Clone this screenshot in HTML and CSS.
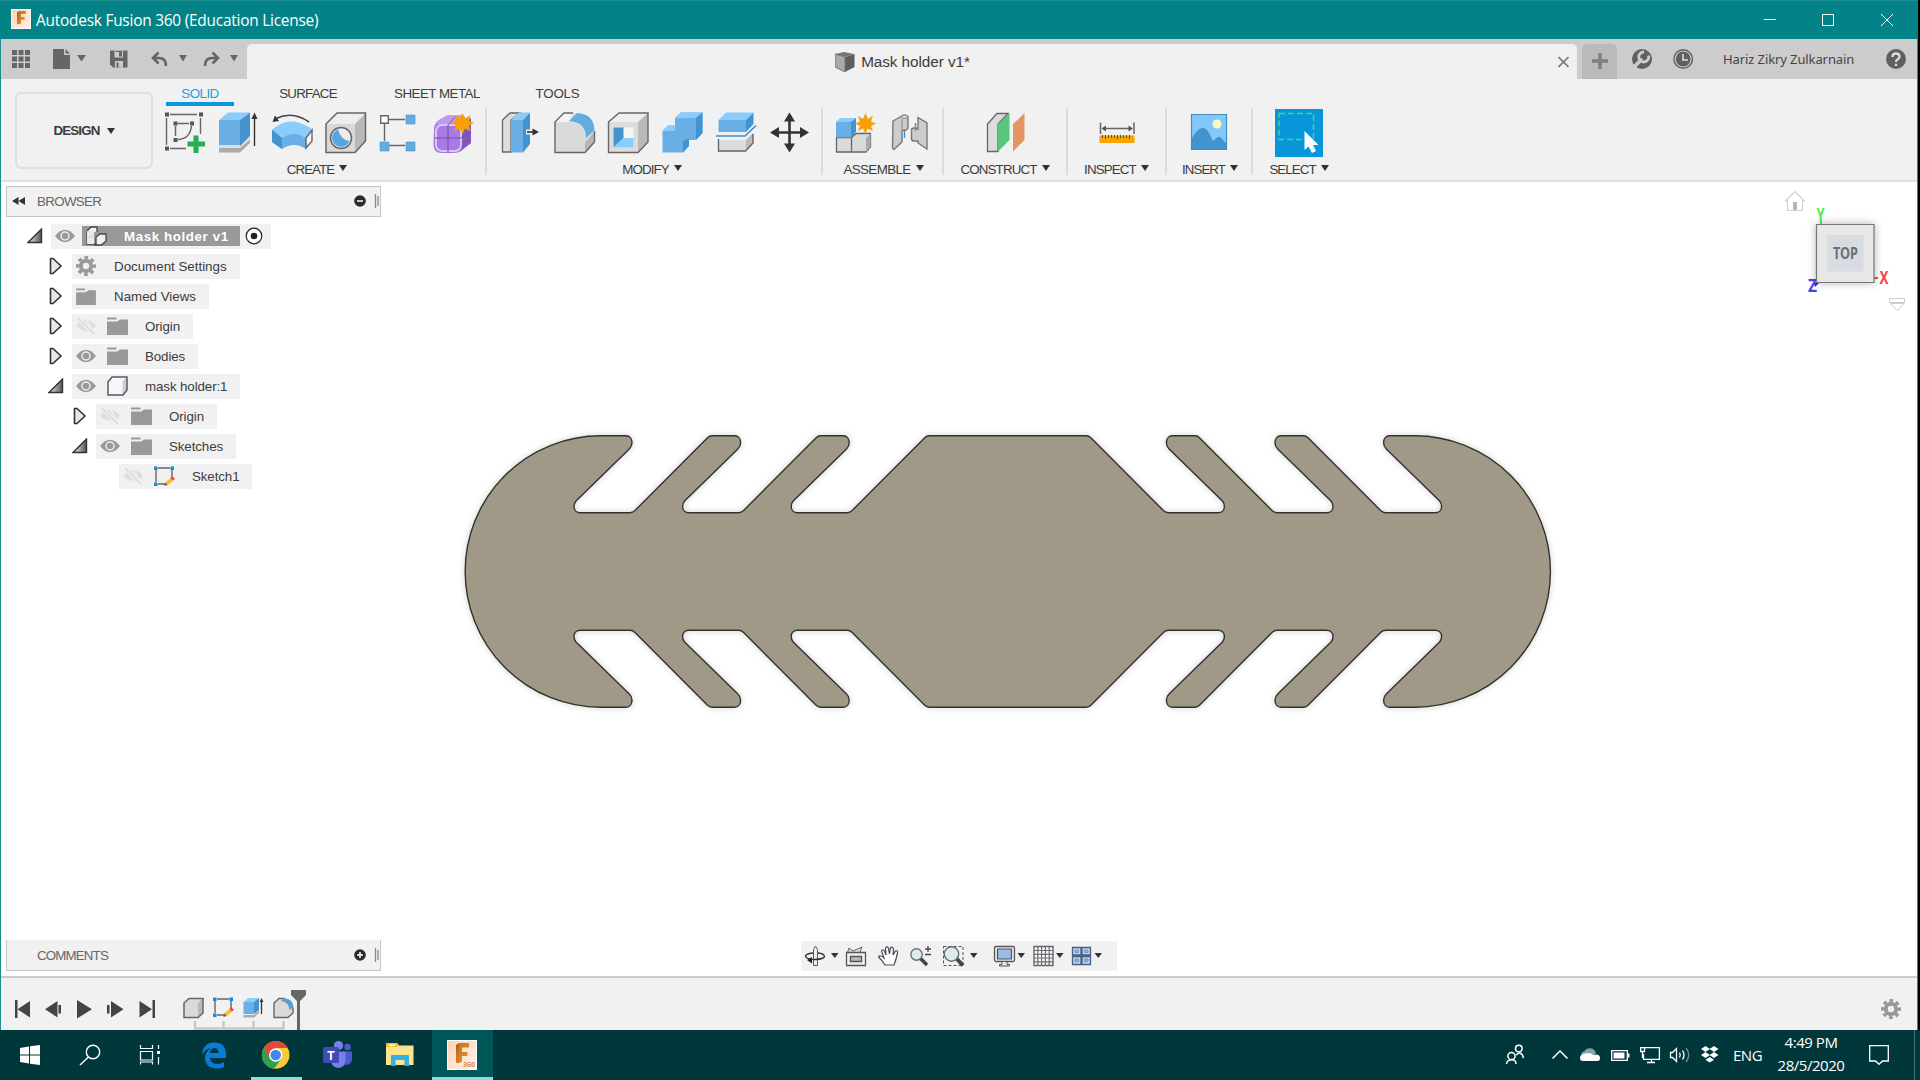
FILE: index.html
```html
<!DOCTYPE html>
<html lang="en">
<head>
<meta charset="utf-8">
<title>Autodesk Fusion 360 (Education License)</title>
<link rel="stylesheet" href="styles.css">
</head>
<body>
<svg class="defs" aria-hidden="true">
  <defs>
    <symbol id="eye" viewBox="0 0 20 20"><path d="M0 10Q10-2.500 20 10Q10 22.500 0 10Z" fill="#999"/><circle cx="10" cy="10" r="4" fill="none" stroke="#eee" stroke-width="1.500"/></symbol>
    <symbol id="eye-off" viewBox="0 0 20 20"><path d="M0 10Q4 4 10 3.800L15 13Q8 17.500 0 10ZM12 4Q17 5.500 20 10L16.500 13.500Z" fill="#dedede"/><path d="M2 2L18 18" stroke="#f1f1f1" stroke-width="4"/><path d="M2 2L18 18" stroke="#d8d8d8" stroke-width="1.600"/></symbol>
    <symbol id="folder" viewBox="0 0 21 18"><path d="M0 4.500H10L13 2.500H21V18H0Z" fill="#999"/><path d="M0 .500H9.500V2.500H0Z" fill="#999"/></symbol>
    <symbol id="gear" viewBox="0 0 20 20"><circle cx="10" cy="10" r="5.200" fill="none" stroke="#999" stroke-width="4"/><circle cx="10" cy="10" r="8.300" fill="none" stroke="#999" stroke-width="3.400" stroke-dasharray="3.600 2.919" stroke-dashoffset="1.800"/></symbol>
    <symbol id="closed" viewBox="0 0 14 18"><path d="M1.500 1.500H4L12 9L4 16.500H1.500Z" fill="#e8e8e8" stroke="#333" stroke-width="1.600"/></symbol>
    <symbol id="open" viewBox="0 0 16 16"><path d="M1 14.500L14.500 1V14.500Z" fill="url(#tri)" stroke="#333" stroke-width="1.400"/></symbol>
    <symbol id="sketch" viewBox="0 0 21 21"><path d="M4 2H16M2 4V16M18 4V12M4 18H12" stroke="#666" stroke-width="1.400" fill="none"/><path d="M0 .500h3.500V4H0zM16.500 .500H20V4h-3.500zM0 16.500h3.500V20H0z" fill="#0d8ee0"/><path d="M11 16.500l6-5 2.500 3-6 5z" fill="#f9bd3d"/><path d="M16.500 11.800l2-1.500 2.300 2.800-2 1.500z" fill="#f0384a"/><path d="M10.500 18l1-1.500 2 2.500-3 1z" fill="#666"/></symbol>
    <linearGradient id="tri" x1="0" x2="1"><stop offset="0" stop-color="#eee"/><stop offset="1" stop-color="#555"/></linearGradient>
    <linearGradient id="orange" x1="0" x2="1" y2="1"><stop offset="0" stop-color="#b3580e"/><stop offset="1" stop-color="#f0a448"/></linearGradient>
    <linearGradient id="cream" x1="0" x2="1" y2="1"><stop offset="0" stop-color="#fbd3b0"/><stop offset="1" stop-color="#fff4ec"/></linearGradient>
    <symbol id="fusion" viewBox="0 0 30 30"><path d="M0 0H30V30H0Z" fill="#fff"/><path d="M1 1H29V29H1Z" fill="url(#cream)"/><path d="M9 5L12 3H22V7.500H15V12H20.500V16H15V21L12 23H9Z" fill="url(#orange)"/><path d="M12 3H22V6L15 7.500V22L12 23Z" fill="#d9832c" opacity=".6"/></symbol>
  </defs>
</svg>

<div class="window">
  <header class="titlebar">
    <svg class="app-logo" width="20" height="20"><use href="#fusion"/></svg>
    <span class="app-title">Autodesk Fusion 360 (Education License)</span>
    <svg class="window-buttons" width="153" height="38" viewBox="1764 0 153 38" fill="none" stroke="#fff" stroke-width="1"><path d="M1764 18.500H1776M1822.500 13.500H1833.500V24.500H1822.500ZM1881 13L1893 25M1893 13L1881 25"/></svg>
  </header>

  <div class="appbar">
    <div class="quick">
      <svg width="40" height="40" viewBox="1 39 40 40"><path d="M12 50h5v5h-5zm6.500 0h5v5h-5zm6.500 0h5v5h-5zM12 56.500h5v5h-5zm6.500 0h5v5h-5zm6.500 0h5v5h-5zM12 63h5v5h-5zm6.500 0h5v5h-5zm6.500 0h5v5h-5z"/></svg>
      <svg width="57" height="40" viewBox="41 39 57 40"><path d="M53 49H64V55H70V69H53ZM65.500 49L70 53.500H65.500ZM77 55H86L81.500 61.500Z"/></svg>
      <svg width="42" height="40" viewBox="98 39 42 40"><path d="M110 50.500H127.500V67.500H113L110 64.500Z"/><path d="M114.500 50.500H123V57.500H114.500ZM115 61H123V67.500H115Z" fill="#ccc"/><path d="M115.500 51H122V56.500H119V52H115.500ZM116.500 62.500H118.500V67.500H116.500Z"/></svg>
      <svg width="55" height="40" viewBox="140 39 55 40"><path d="M158.500 52.500L153 58L158.500 63.500M153.500 58H159Q166 58 166 66" fill="none" stroke="#666" stroke-width="2.600"/><path d="M179 55H187L183 61.500Z"/></svg>
      <svg width="52" height="40" viewBox="195 39 52 40"><path d="M212.500 52.500L218 58L212.500 63.500M217.500 58H212Q205 58 205 66" fill="none" stroke="#666" stroke-width="2.600"/><path d="M230 55H238L234 61.500Z"/></svg>
    </div>
    <div class="doc-tab">
      <div class="doc-title">
        <svg width="20" height="20" viewBox="0 0 20 20"><path d="M0 2L10 5V20L0 15Z" fill="#aaa"/><path d="M10 5L19.500 2V15L10 20Z" fill="#5d5d5d"/><path d="M0 2L9 0L19.500 2L10 5Z" fill="#777"/><path d="M0 2V15L10 20V5Z" fill="none" stroke="#777"/></svg>
        <span>Mask holder v1*</span>
      </div>
      <svg width="11" height="12" viewBox="0 0 11 12"><path d="M.500 1L10.500 11M10.500 1L.500 11" stroke="#777" stroke-width="1.600"/></svg>
    </div>
    <div class="new-tab"><svg width="16" height="16" viewBox="0 0 16 16"><path d="M8 0V16M0 8H16" stroke="#808080" stroke-width="3.400"/></svg></div>
    <div class="account">
      <svg width="41" height="40" viewBox="1621 39 41 40"><circle cx="1642" cy="59" r="10" fill="#606060"/><path d="M1634 67L1641 60" stroke="#ccc" stroke-width="3.800" stroke-linecap="round"/><path d="M1648.500 55.500A5 5 0 1 1 1644 52" fill="none" stroke="#ccc" stroke-width="2.800"/></svg>
      <svg width="41" height="40" viewBox="1662 39 41 40"><circle cx="1683.200" cy="59" r="9.300" fill="none" stroke="#606060" stroke-width="1.400"/><circle cx="1683.200" cy="59" r="7.400" fill="#606060"/><path d="M1683 54V60H1688" fill="none" stroke="#ddd" stroke-width="1.600"/></svg>
      <span class="user">Hariz Zikry Zulkarnain</span>
      <svg class="help" width="20" height="20" viewBox="0 0 20 20"><circle cx="10" cy="10" r="10" fill="#606060"/><path d="M6.500 8Q6.500 4.500 10 4.500T13.500 7.700Q13.500 9 11.700 10.200T10 13M10 14.800V17" fill="none" stroke="#ddd" stroke-width="2.300"/></svg>
    </div>
  </div>

  <div class="ribbon">
    <div class="workspace"><span>DESIGN</span><i class="caret"></i></div>
    <div class="ribbon-main">
      <nav class="ribbon-tabs">
        <span class="rtab solid">SOLID</span><span class="rtab surface">SURFACE</span><span class="rtab sheet">SHEET METAL</span><span class="rtab tools">TOOLS</span>
      </nav>
      <div class="groups">
        <section class="group create">
          <div class="icons">
            <svg width="54" height="52" viewBox="158 108 54 52"><path d="M170 114.500H197M166.500 118V145M200.500 118V134M170 148.500H186" stroke="#666" stroke-width="1.400"/><path d="M178 123.500H189M175.500 126V136M191.500 126Q190 139 178 139.500" fill="none" stroke="#666" stroke-width="1.500"/><path d="M165 112.500h4v4h-4zm34 0h4v4h-4zm-34 34h4v4h-4zm8.500-25h4v4h-4zm16.500 0h4v4h-4zm-16.500 16.500h4v4h-4z" fill="#555"/><path d="M193.500 135.500H198.500V141.500H205V146.500H198.500V153H193.500V146.500H187.500V141.500H193.500Z" fill="#27ae52"/></svg>
            <svg width="54" height="52" viewBox="212 108 54 52"><path d="M219 148H240L250 139V143L240 152.500H219Z" fill="#aaa"/><path d="M219 145H240L250 136V139.500L240 148H219Z" fill="#ddd"/><path d="M219 120H240V145H219Z" fill="#69aee5"/><path d="M219 120L228 112.500H250L240 120Z" fill="#8accfb"/><path d="M240 120L250 112.500V136L240 146Z" fill="#4393cf"/><path d="M254.500 117V146" stroke="#333" stroke-width="1.400"/><path d="M254.500 112.500L257.500 119H251.500Z" fill="#333"/></svg>
            <svg width="54" height="52" viewBox="266 108 54 52"><path d="M276 118.500Q293 110.500 309 122" fill="none" stroke="#444" stroke-width="1.600"/><path d="M272.500 122L275 115.500L279 121Z" fill="#333"/><path d="M272 130Q290 115 313 130L306 138V149Q294 141 282 149L272 142Z" fill="#69aee5"/><path d="M272 130Q290 113 313 130L305 138Q294 130 282 138Z" fill="#8accfb"/><path d="M272 130L282 138V149L272 142Z" fill="#4393cf"/><path d="M306 138L312 130V141L306 148Z" fill="#f6f6f6" stroke="#666" stroke-width="1.400"/></svg>
            <svg width="54" height="52" viewBox="320 108 54 52"><path d="M326 124L337 113H365.500V141L355 152.500H326Z" fill="#eee"/><path d="M326 124H355V152.500H326Z" fill="#d8d8d8"/><path d="M355 124L365.500 113V141L355 152.500Z" fill="#b8b8b8"/><path d="M326 124L337 113H365.500V141L355 152.500H326Z" fill="none" stroke="#666" stroke-width="1.500"/><circle cx="341" cy="138" r="10.500" fill="#ececec" stroke="#666" stroke-width="1.500"/><path d="M338 129.500A9 9 0 1 0 349.500 141Q341 140 338 129.500Z" fill="#57a6df"/></svg>
            <svg width="54" height="52" viewBox="374 108 54 52"><path d="M389 119.500H405M384.500 124V141M389 145.500H405" stroke="#666" stroke-width="1.400"/><path d="M380.700 115.700h7.600v7.600h-7.600z" fill="#fff" stroke="#666" stroke-width="1.400"/><path d="M406 115h9v9h-9zm0 27h9v9h-9zm-26 0h9v9h-9z" fill="#63ace2" stroke="#5c99c8" stroke-width=".7"/></svg>
            <svg width="54" height="52" viewBox="428 108 54 52"><path d="M434 129Q434 124 439 120L447 115.500H463L471 124V143L461 151Q458 153 452 153H441Q434 153 433.500 145Z" fill="#a87ae4"/><path d="M436 122L447 115.500H463L458 125H439Z" fill="#c298f3"/><path d="M462 125L471 118V143L460 151Z" fill="#8258b9"/><rect x="436" y="125" width="25" height="26" rx="6" fill="none" stroke="#dac6f6" stroke-width="2"/><path d="M434 138H461L471 132M448 125V153M448 125L456 116" fill="none" stroke="#7749ae"/><path d="M462.500 113L465 118.500L470.500 115L469 121L474 123L469 125.500L470 131L465 128.500L462.500 134L460 128.500L454.500 131L456 125.500L451 123L456 120.500L454.500 115L460 118Z" fill="#f79f06"/></svg>
          </div>
          <div class="label">CREATE<i class="caret"></i></div>
        </section>
        <section class="group modify">
          <div class="icons">
            <svg width="54" height="52" viewBox="493 108 54 52"><path d="M502.500 120L510 113H520L511 120V152H502.500Z" fill="#ddd" stroke="#666" stroke-width="1.300"/><path d="M511 120H523V152.500H511Z" fill="#69aee5"/><path d="M511 120L519 112.500H530L523 120Z" fill="#8accfb"/><path d="M523 120L530 112.500V144L523 152.500Z" fill="#4393cf"/><path d="M526 132H539" stroke="#f1f1f1" stroke-width="5"/><path d="M527 132H534" stroke="#333" stroke-width="1.600"/><path d="M539 132L532.500 128.500V135.500Z" fill="#333"/></svg>
            <svg width="54" height="52" viewBox="547 108 54 52"><path d="M555 122L564 113H574L594.500 131V142L585 152.500H555Z" fill="#dadada"/><path d="M585 143L594.500 131V142L585 152.500Z" fill="#b7b7b7"/><path d="M555 122L564 113H573L569 122Z" fill="#f4f4f4"/><path d="M573 113H564L555 122V152.500H585L594.500 142V131" fill="none" stroke="#666" stroke-width="1.400"/><path d="M569 121L577 113Q594 114 594.500 130L586 138Q586 122 569 121Z" fill="#63ace2"/></svg>
            <svg width="54" height="52" viewBox="601 108 54 52"><path d="M608.500 122L619 113H648V142L638 152.500H608.500Z" fill="#eee"/><path d="M638 122L648 113V142L638 152.500Z" fill="#b9b9b9"/><path d="M608.500 122H638V152.500H608.500Z" fill="#dcdcdc"/><path d="M608.500 122L619 113H648V142L638 152.500H608.500Z" fill="none" stroke="#666" stroke-width="1.400"/><path d="M613.500 127.500H633.500V147.500H613.500Z" fill="#f4f4f4"/><path d="M613.500 127.500H623.500V138L613.500 147.500Z" fill="#4393cf"/><path d="M613.500 147.500L623.500 138H633.500V147.500Z" fill="#8accfb"/></svg>
            <svg width="54" height="52" viewBox="655 108 54 52"><path d="M675 118L681 112.500H702.500V133L696 140H689V146L683 152.500H662.500V131L668 125.500H675Z" fill="#69aee5"/><path d="M675 118L681 112.500H702.500L696 118ZM662.500 131L668 125.500H675V131Z" fill="#8accfb"/><path d="M696 118L702.500 112.500V133L696 140ZM683 141L689 138V146L683 152.500Z" fill="#4393cf"/></svg>
            <svg width="54" height="52" viewBox="709 108 54 52"><path d="M718.500 120L726 112.500H753.500L746 120Z" fill="#8accfb"/><path d="M718.500 120H746V132H718.500Z" fill="#69aee5"/><path d="M746 120L753.500 112.500V124L746 132Z" fill="#4393cf"/><path d="M716 136H745L756 125.500" fill="none" stroke="#2e8fdc" stroke-width="1.500"/><path d="M718.500 140H746L753 133V143L745.500 151H718.500Z" fill="#dcdcdc"/><path d="M746 140L753 133V143L746 151Z" fill="#bbb"/><path d="M718.500 139V151H745.500L753 143V134" fill="none" stroke="#666" stroke-width="1.400"/></svg>
            <svg width="54" height="52" viewBox="763 108 54 52"><path d="M789.500 118V147M776 132.500H803" stroke="#333" stroke-width="2.600"/><path d="M789.500 112.500L795 121.500H784ZM789.500 152.500L795 143.500H784ZM770 132.500L779 127V138ZM809 132.500L800 127V138Z" fill="#333"/></svg>
          </div>
          <div class="label">MODIFY<i class="caret"></i></div>
        </section>
        <section class="group assemble">
          <div class="icons">
            <svg width="54" height="52" viewBox="830 108 54 52"><path d="M837.500 137.500H852.500V152H837.500ZM852.500 137.500L857 133.500H871.500V147L867 152H852.500Z" fill="#dadada" stroke="#666" stroke-width="1.300"/><path d="M867 138L871.500 133.500V147L867 152Z" fill="#aaa"/><path d="M837 122H852V137.500H837Z" fill="#69aee5"/><path d="M837 122L841 118H857L852 122Z" fill="#8accfb"/><path d="M852 122L857 118V132L852 137.500Z" fill="#4393cf"/><path d="M866.500 113L869 119L874 115.500L872 121.500L877 123.500L872 126L874 131L868.500 128.500L866.500 134L864 128.500L858.500 131L861 126L856 123.500L861 121.500L859 116L864 119Z" fill="#f79f06"/></svg>
            <svg width="54" height="52" viewBox="884 108 54 52"><path d="M894 121L902 116.500Q905 114 909 116.500V128Q908 131 905 130L903 131V142L895 149.500Q893.500 149 893.500 147Z" fill="#ccc" stroke="#777" stroke-width="1.400"/><path d="M903 119V130" stroke="#888"/><ellipse cx="905.500" cy="116.700" rx="3" ry="1.500" fill="#eee" stroke="#777"/><path d="M905.500 131V138" stroke="#2197f3" stroke-width="1.400"/><path d="M919 117.500L928 123V149L919 143V141H914Q912 140 912.500 137V129Q915 127 919 129Z" fill="#ccc" stroke="#777" stroke-width="1.400"/><path d="M916.500 123V131" stroke="#2197f3" stroke-width="1.400"/></svg>
          </div>
          <div class="label">ASSEMBLE<i class="caret"></i></div>
        </section>
        <section class="group construct">
          <div class="icons"><svg width="54" height="52" viewBox="978 108 54 52"><path d="M987.500 124L997 113.500H1008L998 124V151.500H987.500Z" fill="#ddd" stroke="#666" stroke-width="1.300"/><path d="M998 124L1009.500 113V140L998 151.500Z" fill="#5ac57c"/><path d="M1013 124L1024.500 113V140L1013 151.500Z" fill="#e59561"/></svg></div>
          <div class="label">CONSTRUCT<i class="caret"></i></div>
        </section>
        <section class="group inspect">
          <div class="icons"><svg width="54" height="52" viewBox="1090 108 54 52"><path d="M1100.500 122.500V134M1134 122.500V134M1104 128.500H1131" stroke="#666" stroke-width="1.500"/><path d="M1101.500 128.500L1106 125.500V131.500ZM1133 128.500L1128.500 125.500V131.500Z" fill="#555"/><path d="M1099.500 135.500H1134.500V143H1099.500Z" fill="#f9a303"/><path d="M1102.500 135v3m3-3v4m3-4v3m3-3v3m3-3v3m3-3v4m3-4v3m3-3v3m3-3v3m3-3v4" stroke="#555"/></svg></div>
          <div class="label">INSPECT<i class="caret"></i></div>
        </section>
        <section class="group insert">
          <div class="icons"><svg width="54" height="52" viewBox="1182 108 54 52"><path d="M1191.500 114.500H1226.500V149.500H1191.500Z" fill="#82c8fa" stroke="#478dbf" stroke-width="1.200"/><path d="M1192 138Q1202 121 1209 133L1213 141L1217 137.500Q1220 135 1223 140L1226 143V149H1192Z" fill="#4393cf"/><circle cx="1217" cy="124" r="4.500" fill="#fbf7bd"/></svg></div>
          <div class="label">INSERT<i class="caret"></i></div>
        </section>
        <section class="group select">
          <div class="icons"><svg width="54" height="52" viewBox="1273 108 54 52"><path d="M1276 109H1324V157H1276Z" fill="#0896da"/><path d="M1280 113.500H1314.500V139.500H1280Z" fill="none" stroke="#4bd18b" stroke-width="1.500" stroke-dasharray="6 3"/><path d="M1305.500 131V150L1309.500 146.500L1313 153L1317 151L1314 145H1319.500Z" fill="#fff"/></svg></div>
          <div class="label">SELECT<i class="caret"></i></div>
        </section>
      </div>
    </div>
  </div>

  <main class="viewport">
    <svg class="canvas" width="1916" height="794" viewBox="1 182 1916 794">
      <path class="model" d="M600.800 435.800H626
        c4 0 6 3.500 6 7 0 2.500-1 4.700-2.700 6.200l-53.300 52c-1.500 1.700-2 3.500-2 5.500 0 3.500 2.500 6.200 6.500 6.200h49.500c2 0 3.500-.8 5-2.200l72.300-72.500c1.500-1.500 3-2.200 4.700-2.200h22.600
        c4 0 6 3.500 6 7 0 2.500-1 4.700-2.700 6.200l-53.300 52c-1.500 1.700-2 3.500-2 5.500 0 3.500 2.500 6.200 6.500 6.200h49.500c2 0 3.500-.8 5-2.200l72.300-72.500c1.500-1.500 3-2.200 4.700-2.200h22.600
        c4 0 6 3.500 6 7 0 2.500-1 4.700-2.700 6.200l-53.300 52c-1.500 1.700-2 3.500-2 5.500 0 3.500 2.500 6.200 6.500 6.200h49.500c2 0 3.500-.8 5-2.200l72.300-72.500c1.500-1.500 3-2.200 4.700-2.200
        H1086.400
        c1.700 0 3.200.7 4.700 2.200l72.300 72.500c1.500 1.400 3 2.200 5 2.200h49.500c4 0 6.500-2.700 6.500-6.200 0-2-.5-3.800-2-5.500l-53.300-52c-1.700-1.500-2.700-3.700-2.700-6.200 0-3.500 2-7 6-7h22.600
        c1.700 0 3.200.7 4.700 2.200l72.300 72.500c1.500 1.400 3 2.200 5 2.200h49.500c4 0 6.500-2.700 6.500-6.200 0-2-.5-3.800-2-5.500l-53.300-52c-1.700-1.500-2.700-3.700-2.700-6.200 0-3.500 2-7 6-7h22.600
        c1.700 0 3.200.7 4.700 2.200l72.300 72.500c1.500 1.400 3 2.200 5 2.200h49.500c4 0 6.500-2.700 6.500-6.200 0-2-.5-3.800-2-5.500l-53.300-52c-1.700-1.500-2.700-3.700-2.700-6.200 0-3.500 2-7 6-7
        H1414.800A135.700 135.700 0 0 1 1414.800 707.200H1389.600
        c-4 0-6-3.500-6-7 0-2.500 1-4.700 2.700-6.200l53.300-52c1.500-1.700 2-3.500 2-5.500 0-3.500-2.500-6.200-6.500-6.200h-49.500c-2 0-3.500.8-5 2.200l-72.300 72.500c-1.500 1.500-3 2.200-4.700 2.200h-22.600
        c-4 0-6-3.500-6-7 0-2.500 1-4.700 2.700-6.200l53.300-52c1.500-1.700 2-3.500 2-5.500 0-3.500-2.500-6.200-6.500-6.200h-49.500c-2 0-3.500.8-5 2.200l-72.300 72.500c-1.500 1.500-3 2.200-4.700 2.200h-22.600
        c-4 0-6-3.500-6-7 0-2.500 1-4.700 2.700-6.200l53.300-52c1.500-1.700 2-3.500 2-5.500 0-3.500-2.500-6.200-6.500-6.200h-49.500c-2 0-3.500.8-5 2.200l-72.300 72.500c-1.500 1.500-3 2.200-4.700 2.200
        H929.200
        c-1.700 0-3.200-.7-4.700-2.200l-72.300-72.500c-1.500-1.400-3-2.200-5-2.200h-49.500c-4 0-6.500 2.700-6.500 6.200 0 2 .5 3.800 2 5.500l53.300 52c1.700 1.500 2.700 3.700 2.700 6.200 0 3.500-2 7-6 7h-22.600
        c-1.700 0-3.200-.7-4.700-2.200l-72.300-72.500c-1.500-1.400-3-2.200-5-2.200h-49.500c-4 0-6.500 2.700-6.500 6.200 0 2 .5 3.800 2 5.500l53.300 52c1.700 1.500 2.700 3.700 2.700 6.200 0 3.500-2 7-6 7h-22.600
        c-1.700 0-3.200-.7-4.700-2.200l-72.300-72.500c-1.500-1.400-3-2.200-5-2.200h-49.500c-4 0-6.500 2.700-6.500 6.200 0 2 .5 3.800 2 5.500l53.300 52c1.700 1.500 2.700 3.700 2.700 6.200 0 3.500-2 7-6 7
        H600.800A135.700 135.700 0 0 1 600.800 435.800Z"/>
      <path d="M1785 201.500L1795 191.500L1805 201.500M1787.500 200V210.500H1802.500V200" fill="none" stroke="#d0d0d0" stroke-width="1.200"/><path d="M1793 202H1797V210H1793Z" fill="#b5b5b5"/>
      <text class="axis" x="1816.500" y="220.500" fill="#4cf04c" textLength="8" lengthAdjust="spacingAndGlyphs">Y</text>
      <path d="M1821 220V224" stroke="#4cf04c" stroke-width="2"/>
      <text class="axis" x="1879.500" y="283.500" fill="#f94646" textLength="9" lengthAdjust="spacingAndGlyphs">X</text>
      <path d="M1874 278H1878" stroke="#f94646" stroke-width="2"/>
      <text class="axis" x="1808" y="292" fill="#4646f0" textLength="9" lengthAdjust="spacingAndGlyphs">Z</text>
      <path class="cube" d="M1816.500 224.500H1874V282.500H1816.500Z"/>
      <path d="M1827 235H1863.500V271.500H1827Z" fill="#d8dce1"/>
      <path d="M1814 283H1819L1815 287Z" fill="#2020f0"/>
      <text class="face" x="1833" y="259" textLength="25" lengthAdjust="spacingAndGlyphs">TOP</text>
      <path d="M1889.500 298.500H1904.500V302.500H1889.500ZM1890.500 303.500H1904L1897.500 310.500Z" fill="#fff" stroke="#ccc"/>
    </svg>

    <aside class="browser">
      <div class="panel-head">
        <svg width="31" height="14" viewBox="6 0 31 14"><path d="M18.500 3V11L12 7ZM25 3V11L18.500 7Z" fill="#333"/></svg>
        <span>BROWSER</span>
        <svg width="26" height="16" viewBox="0 0 26 16"><circle cx="6" cy="8" r="5.800" fill="#2c2c2c"/><path d="M3 8H9" stroke="#fff" stroke-width="1.500"/><path d="M21.500 1V15M24 3V13" stroke="#888" stroke-width="1.300"/></svg>
      </div>
      <ul class="tree">
        <li class="l0"><svg class="tg" width="16" height="16"><use href="#open"/></svg><div class="node root"><svg width="20" height="20"><use href="#eye"/></svg>
          <span class="hot"><svg width="22" height="20" viewBox="0 0 22 20"><path d="M1 5L5 1H11V6M1 5V18H9V19H15.500L20 15V8H14L10 11V19" fill="#f0f1f6" stroke="#444" stroke-width="1.300"/><path d="M1 5H8V18H1Z" fill="#e8e9f0"/><path d="M1 11H9" stroke="#ccc"/></svg>Mask holder v1</span>
          <svg width="18" height="18" viewBox="0 0 18 18"><circle cx="9" cy="9" r="7.800" fill="#fff" stroke="#222" stroke-width="1.200"/><circle cx="9" cy="9" r="3.300" fill="#222"/></svg></div></li>
        <li class="l1"><svg class="tg" width="14" height="18"><use href="#closed"/></svg><div class="node"><svg width="20" height="20"><use href="#gear"/></svg><span class="wide">Document Settings</span></div></li>
        <li class="l1"><svg class="tg" width="14" height="18"><use href="#closed"/></svg><div class="node"><svg width="20" height="17"><use href="#folder"/></svg><span class="wide">Named Views</span></div></li>
        <li class="l1"><svg class="tg" width="14" height="18"><use href="#closed"/></svg><div class="node"><svg width="20" height="20"><use href="#eye-off"/></svg><svg width="21" height="18"><use href="#folder"/></svg><span>Origin</span></div></li>
        <li class="l1"><svg class="tg" width="14" height="18"><use href="#closed"/></svg><div class="node"><svg width="20" height="20"><use href="#eye"/></svg><svg width="21" height="18"><use href="#folder"/></svg><span>Bodies</span></div></li>
        <li class="l1"><svg class="tg" width="16" height="16"><use href="#open"/></svg><div class="node"><svg width="20" height="20"><use href="#eye"/></svg><svg width="21" height="20" viewBox="0 0 21 20"><path d="M1 5L5 1H20V15L16 19H1Z" fill="#f6f7fa"/><path d="M15.500 5L20 1V15L15.500 19Z" fill="#d0d1d6"/><path d="M1 6L5 1H20V14L16 19H1Z" fill="none" stroke="#555b66" stroke-width="1.500"/></svg><span>mask holder:1</span></div></li>
        <li class="l2"><svg class="tg" width="14" height="18"><use href="#closed"/></svg><div class="node"><svg width="20" height="20"><use href="#eye-off"/></svg><svg width="21" height="18"><use href="#folder"/></svg><span>Origin</span></div></li>
        <li class="l2"><svg class="tg" width="16" height="16"><use href="#open"/></svg><div class="node"><svg width="20" height="20"><use href="#eye"/></svg><svg width="21" height="18"><use href="#folder"/></svg><span>Sketches</span></div></li>
        <li class="l3"><div class="node"><svg width="20" height="20"><use href="#eye-off"/></svg><svg width="21" height="21"><use href="#sketch"/></svg><span>Sketch1</span></div></li>
      </ul>
    </aside>

    <div class="comments panel-head">
      <span>COMMENTS</span>
      <svg width="26" height="16" viewBox="0 0 26 16"><circle cx="6" cy="8" r="5.800" fill="#2c2c2c"/><path d="M3 8H9M6 5V11" stroke="#fff" stroke-width="1.500"/><path d="M21.500 1V15M24 3V13" stroke="#888" stroke-width="1.300"/></svg>
    </div>

    <div class="navbar">
      <svg width="40" height="30" viewBox="801 941 40 30"><path d="M813.500 949.500L815.500 946L817.500 949.500V965.500H813.500Z" fill="#eee" stroke="#555"/><path d="M813 953Q805 954 805.500 956.500Q807 959.500 815 959.500Q824 959 824.500 956.500Q824 953.500 818 953" fill="none" stroke="#333" stroke-width="1.400"/><path d="M807 960L812 957V963.500Z" fill="#222"/><path d="M831 953H838.500L834.800 958Z" fill="#333"/></svg>
      <svg width="31" height="30" viewBox="841 941 31 30"><path d="M847 954L849 948L853 951L862 947L860 952" fill="#ddd" stroke="#666"/><path d="M846.500 952.500H865.500V965.500H846.500Z" fill="#eee" stroke="#555" stroke-width="1.300"/><path d="M850.500 956.500H861.500V961.500H850.500Z" fill="#b5b8c8" stroke="#555" stroke-width="1.300"/></svg>
      <svg width="32" height="30" viewBox="872 941 32 30"><path d="M885 965Q882 960 878.500 957Q880 954.500 884 958L881.500 951Q882.500 948.500 884.500 951L886 955L885.500 948Q887.500 945.500 888.500 948.500L889.500 954L890.500 948Q892.500 946 893.500 949L893 955L895.500 951Q898 950 897.500 953Q896 960 894 965Z" fill="#fff" stroke="#444a55" stroke-width="1.200"/></svg>
      <svg width="34" height="30" viewBox="904 941 34 30"><path d="M920 958L927 965" stroke="#444" stroke-width="3.500"/><circle cx="916.500" cy="954.500" r="5.700" fill="#dcecee" stroke="#667078" stroke-width="1.400"/><path d="M925 949H931M928 946V952M925 954.500H931" stroke="#444" stroke-width="1.300"/></svg>
      <svg width="46" height="30" viewBox="938 941 46 30"><path d="M943.500 946.500H963V965.500H943.500Z" fill="none" stroke="#555" stroke-dasharray="3 2"/><path d="M956 958L963 965.500" stroke="#444" stroke-width="4"/><circle cx="951.500" cy="954" r="7.200" fill="#dcecee" stroke="#667078" stroke-width="1.400"/><path d="M970 953H977.500L973.800 958Z" fill="#333"/></svg>
      <svg width="44" height="30" viewBox="984 941 44 30"><rect x="994.500" y="946.500" width="20" height="15" rx="1.500" fill="#eee" stroke="#555" stroke-width="1.300"/><path d="M997.500 949H1011.500V959H997.500Z" fill="#9dbbe3" stroke="#456" stroke-width="1.200"/><path d="M1002 962V964.500H999.500V966H1009.500V964.500H1007V962" fill="#eee" stroke="#555"/><path d="M1017.500 953H1025L1021.300 958Z" fill="#333"/></svg>
      <svg width="39" height="30" viewBox="1028 941 39 30"><path d="M1034 946.500H1053V965.500H1034Z" fill="#fafafa" stroke="#666" stroke-width="1.400"/><path d="M1034 950.500H1053M1034 954.300H1053M1034 958H1053M1034 961.800H1053M1037.800 946V966M1041.600 946V966M1045.400 946V966M1049.200 946V966" stroke="#6a6d78" stroke-width="1.200"/><path d="M1056 953H1063.500L1059.800 958Z" fill="#333"/></svg>
      <svg width="39" height="30" viewBox="1067 941 39 30"><path d="M1072.500 947.500H1081V955H1072.500ZM1082 947.500H1090.500V955H1082ZM1072.500 956.500H1081V964.500H1072.500ZM1082 956.500H1090.500V964.500H1082Z" fill="#bdd3ee" stroke="#4b5f80" stroke-width="1.300"/><path d="M1075 950h3.500v2.500h-3.500zm9.500 0h3.500v2.500h-3.500zm-9.500 9h3.500v2.500h-3.500zm9.500 0h3.500v2.500h-3.500z" fill="#8cb2e4" stroke="#5d87be" stroke-width=".7"/><path d="M1094.500 953H1102L1098.300 958Z" fill="#333"/></svg>
    </div>
  </main>

  <footer class="timeline">
    <svg width="170" height="52" viewBox="1 978 170 52" fill="#444"><path d="M15 1000H17.500V1018H15ZM30 1001V1017.500L17.500 1009.200ZM57.500 1001V1017.500L45 1009.200ZM58.500 1005H61V1013.500H58.500ZM77 1000V1018.500L92 1009.200ZM107 1005H109.500V1013.500H107ZM111 1001V1017.500L123.500 1009.200ZM139.500 1001V1017.500L152 1009.200ZM152.500 1000H155V1018H152.500Z"/></svg>
    <svg width="150" height="52" viewBox="171 978 150 52"><path d="M184 1003L189 998.500H203V1013L198 1017.500H184Z" fill="#dadada"/><path d="M198 1003L203 998.500V1013L198 1017.500Z" fill="#b9b9b9"/><path d="M184 1003L189 998.500H203V1013L198 1017.500H184Z" fill="none" stroke="#666" stroke-width="1.500"/>
      <use href="#sketch" x="213" y="997" width="21" height="21"/>
      <path d="M243.500 1015H254L259 1010V1013L254 1017.500H243.500Z" fill="#aaa"/><path d="M243.500 1002L248 998H259L254 1002Z" fill="#8accfb"/><path d="M243.500 1002H254V1014H243.500Z" fill="#69aee5"/><path d="M254 1002L259 998V1010L254 1014Z" fill="#4393cf"/><path d="M261.500 1001V1014" stroke="#333" stroke-width="1.300"/><path d="M261.500 998L263.500 1002H259.500Z" fill="#333"/>
      <path d="M274 1003L279 998.500H284L293 1008V1013L288 1017.500H274Z" fill="#dadada" stroke="#666" stroke-width="1.400"/><path d="M281 1001L285 998.500Q293 999 293.500 1007L289.500 1010Q289 1002 281 1001Z" fill="#4f9fdb"/>
      <path d="M195 1021V1028.500H283.500V1021M223.500 1021V1028M253.500 1021V1028" fill="none" stroke="#c8c8c8" stroke-width="2.400"/>
      <path d="M291 990H306V995L300 1001V1030H297V1001L291 995Z" fill="#666"/></svg>
    <svg class="settings" width="20" height="20"><use href="#gear"/></svg>
  </footer>
</div>

<div class="taskbar">
  <div class="apps">
    <svg width="60" height="50" viewBox="0 1030 60 50"><path d="M20 1048L29 1046.500V1054.500H20ZM30 1046.300L40 1045V1054.500H30ZM20 1055.500H29V1063.500L20 1062ZM30 1055.500H40V1065L30 1063.700Z" fill="#fff"/></svg>
    <svg width="60" height="50" viewBox="60 1030 60 50"><circle cx="93" cy="1052" r="6.700" fill="none" stroke="#fff" stroke-width="1.400"/><path d="M88.500 1057L80 1065" stroke="#fff" stroke-width="1.400"/></svg>
    <svg width="60" height="50" viewBox="120 1030 60 50"><path d="M140.500 1045V1048.500H152.500V1045M140.500 1051.500H152.500V1060H140.500ZM140.500 1064.500V1062H152.500V1064.500M158.500 1045V1049M158.500 1057V1064.500" fill="none" stroke="#fff" stroke-width="1.200"/><path d="M157 1051h3v3h-3z" fill="#fff"/></svg>
    <svg width="71" height="50" viewBox="180 1030 71 50"><path d="M202 1055Q203 1042.500 214.500 1042.500Q226 1043 226 1054V1058H210Q211 1064 217.500 1064Q221 1064 224 1062V1067Q220 1069 215.500 1068.500Q205 1067.500 205 1058Q205 1052 211 1048Q205 1049 202 1055ZM210 1053H218.500Q218 1048 214.500 1048Q210.500 1048.500 210 1053Z" fill="#0a7bd8" fill-rule="evenodd"/></svg>
    <svg class="running" width="51" height="50" viewBox="251 1030 51 50"><circle cx="275.700" cy="1055" r="13.800" fill="#fbc93a"/><path d="M263.700 1048A13.800 13.800 0 0 1 287.700 1048H275.700V1055L269 1058Z" fill="#de4b3d"/><path d="M263.700 1048A13.800 13.800 0 0 0 274 1068.700L282 1058L275 1055L269 1057Z" fill="#2ba24c"/><circle cx="275.700" cy="1055" r="6.700" fill="#fff"/><circle cx="275.700" cy="1055" r="5.300" fill="#4486ee"/></svg>
    <svg width="71" height="50" viewBox="302 1030 71 50"><circle cx="338.500" cy="1045.500" r="4.600" fill="#7a80ea"/><circle cx="347.500" cy="1047" r="3.200" fill="#5059c9"/><path d="M342 1051.500H352V1060Q351 1065 345 1065Z" fill="#5059c9"/><path d="M331 1051.500H345.500V1060Q345 1068 338 1068Q332 1067 331 1062Z" fill="#7a80ea"/><rect x="323" y="1047" width="16" height="16" rx="1.500" fill="#4149b4"/><text x="327.300" y="1059.500" class="teams">T</text></svg>
    <svg width="59" height="50" viewBox="373 1030 59 50"><path d="M386 1043H397L399 1045.500H413.500V1065H386Z" fill="#fce48e"/><path d="M386 1043H397L399 1045.500L396 1047H386Z" fill="#f5c02c"/><path d="M389 1044.500H395V1046H389Z" fill="#fff"/><path d="M391 1055.500Q391 1055 392 1055H408Q409 1055 409 1056V1066H404.500V1060H395.500V1066H391Z" fill="#35b0e7"/></svg>
    <div class="active"><svg width="30" height="30"><use href="#fusion"/></svg><span>360</span></div>
  </div>
  <div class="tray">
    <svg width="40" height="50" viewBox="1500 1030 40 50" fill="none" stroke="#fff" stroke-width="1.500"><circle cx="1518.800" cy="1048.500" r="3.300"/><path d="M1516 1055Q1521.500 1050 1523.500 1058"/><circle cx="1511.500" cy="1056" r="3.600"/><path d="M1506.500 1064Q1507 1060 1511.500 1059.800T1516 1064"/></svg>
    <svg width="34" height="50" viewBox="1540 1030 34 50"><path d="M1552.500 1058.500L1560 1051L1567.500 1058.500" fill="none" stroke="#fff" stroke-width="1.500"/></svg>
    <svg width="32" height="50" viewBox="1574 1030 32 50"><path d="M1582 1056Q1580 1052 1584 1051.500Q1587 1047 1592 1048.500Q1595 1049.500 1596 1053L1590 1058Z" fill="#8aa3a5"/><path d="M1583 1061Q1580 1061 1580 1057.500Q1580.500 1054 1585 1053.500Q1591 1052 1593 1055Q1600 1053 1600 1058.500Q1600 1061 1597 1061Z" fill="#fff"/></svg>
    <svg width="28" height="50" viewBox="1606 1030 28 50"><path d="M1611.700 1050.700H1627.300V1060.300H1611.700Z" fill="none" stroke="#fff" stroke-width="1.300"/><path d="M1613.500 1052.500H1624.500V1058.500H1613.500ZM1628 1053.500H1629.500V1057.500H1628Z" fill="#fff"/></svg>
    <svg width="31" height="50" viewBox="1634 1030 31 50" fill="none" stroke="#fff" stroke-width="1.300"><path d="M1645 1047.600H1659.400V1059.400H1643.500V1054M1651.500 1059.500V1062M1647 1062.500H1655M1640.700 1047.600H1644.500V1051.500H1640.700ZM1642.500 1052V1058"/></svg>
    <svg width="30" height="50" viewBox="1665 1030 30 50" fill="none" stroke="#fff" stroke-width="1.300"><path d="M1670.500 1052.500H1672.500L1676.500 1048.500V1061.500L1672.500 1057.500H1670.500ZM1679.500 1052.500Q1681 1055 1679.500 1057.500M1682.500 1050.500Q1685.500 1055 1682.500 1059.500"/><path d="M1686 1048Q1691.500 1055 1686 1062" stroke="#6d8f90"/></svg>
    <svg width="32" height="50" viewBox="1695 1030 32 50"><path d="M1705.500 1046L1710 1049L1705.500 1052L1701 1049ZM1714 1046L1718.500 1049L1714 1052L1709.500 1049ZM1705.500 1052L1710 1055L1705.500 1058L1701 1055ZM1714 1052L1718.500 1055L1714 1058L1709.500 1055ZM1709.700 1057L1714 1059.800L1709.700 1062.500L1705.500 1059.800Z" fill="#fff"/></svg>
    <span class="lang">ENG</span>
    <div class="clock"><span>4:49 PM</span><span>28/5/2020</span></div>
    <svg class="notice" width="20" height="20" viewBox="0 0 20 20"><path d="M.700 .700H19.300V16H13.500L10 19.300L6.500 16H.700Z" fill="none" stroke="#fff" stroke-width="1.300"/></svg>
  </div>
</div>
</body>
</html>
```
FILE: styles.css
```css
* { box-sizing: border-box; }
body { margin: 0; width: 1920px; height: 1080px; overflow: hidden; background: #000; font-family: "Liberation Sans", Arial, sans-serif; font-size: 13.33px; color: #3c3c3c; }
svg { display: block; flex: none; }
.defs { position: absolute; width: 0; height: 0; }

.window { width: 1918px; height: 1030px; border: solid #1d8f92; border-width: 0 1px; display: flex; flex-direction: column; background: #fff; }

.titlebar { height: 39px; flex: none; background: #038387; border-top: 1px solid #1d8f92; display: flex; align-items: center; margin: 0 -1px; padding-left: 11px; color: #fff; }
.app-logo { margin-top: -2px; }
.app-title { flex: 1; margin-left: 5px; padding-top: 1px; font: 15.4px "Open Sans", "Noto Sans", sans-serif; letter-spacing: -.22px; }
.window-buttons { align-self: flex-start; margin-right: 1px; }

.appbar { height: 40px; flex: none; background: #ccc; display: flex; }
.quick { display: flex; fill: #666; }
.doc-tab { width: 1330px; margin-top: 5px; background: #f1f1f1; border-radius: 5px 5px 0 0; display: flex; align-items: center; padding-right: 8px; }
.doc-title { flex: 1; display: flex; align-items: center; justify-content: center; gap: 6px; font-size: 15.3px; letter-spacing: -.07px; }
.new-tab { width: 35px; margin: 5px 4px 0 5px; background: #bababa; border-radius: 5px 5px 0 0; display: flex; align-items: center; justify-content: center; }
.new-tab svg { margin-top: -2px; }
.account { flex: 1; display: flex; align-items: center; }
.user { margin-left: 20px; flex: 1; font: 13px "Noto Sans", sans-serif; letter-spacing: -.1px; color: #444; white-space: nowrap; }
.help { margin-right: 11px; }

.ribbon { height: 103px; flex: none; background: #f1f1f1; border-bottom: 2px solid #e0e0e0; display: flex; }
.workspace { width: 138px; height: 77px; margin: 13px 5px 0 14px; border: 2px solid #e0e0e0; border-radius: 6px; display: flex; align-items: center; justify-content: center; font-weight: bold; letter-spacing: -.85px; }
.caret { display: inline-block; width: 0; height: 0; border: 4px solid transparent; border-top: 6px solid #333; border-bottom: 0; margin-left: 5px; vertical-align: 3px; }
.workspace .caret { margin-left: 7px; }
.ribbon-tabs { height: 29px; display: flex; padding-left: 8px; }
.rtab { line-height: 29px; text-align: center; letter-spacing: -.75px; }
.solid { width: 68px; height: 27px; border-bottom: 4px solid #0b97dc; color: #1b9fe0; margin-right: 20px; letter-spacing: -.5px; }
.surface { width: 108px; }
.sheet { width: 150px; letter-spacing: -.5px; }
.tools { width: 91px; letter-spacing: -.2px; }
.groups { display: flex; }
.group { height: 67px; border-right: 2px solid #dcdcdc; }
.icons { display: flex; justify-content: center; }
.label { text-align: center; line-height: 19px; letter-spacing: -.95px; }
.create { width: 329px; }
.create .icons, .modify .icons, .assemble .icons { justify-content: flex-start; }
.create .label { padding-right: 9px; }
.modify { width: 336px; padding-left: 6px; }
.modify .label { padding-right: 10px; letter-spacing: -.85px; }
.assemble { width: 121px; padding-left: 7px; }
.assemble .icons { margin-left: -1px; }
.assemble .label { margin-right: 5px; letter-spacing: -.6px; }
.construct { width: 124px; }
.construct .label { letter-spacing: -.85px; }
.inspect { width: 99px; }
.inspect .label { letter-spacing: -.85px; }
.insert { width: 86px; }
.insert .label { padding-left: 2px; }
.select { width: 92px; border: 0; }

.viewport { position: relative; height: 794px; flex: none; background: #fff; }
.model { fill: #a09987; stroke: #33322e; stroke-width: 1.4; filter: drop-shadow(0 0 3px rgba(0,0,0,.18)); }
.axis { font: bold 17px "Noto Sans", sans-serif; }
.cube { fill: #e7e7e7; stroke: #777; stroke-width: 1.2; filter: drop-shadow(0 0 4px rgba(0,0,0,.3)); }
.face { font: bold 16px "Noto Sans", sans-serif; fill: #66707c; }

.browser { position: absolute; left: 5px; top: 4px; width: 375px; }
.panel-head { width: 375px; height: 31px; border: 1px solid #c6c6c6; background: #f1f1f1; display: flex; align-items: center; color: #666; letter-spacing: -.65px; padding-bottom: 1px; }
.panel-head span { flex: 1; }
.panel-head svg:first-child { margin-left: -1px; }
.comments { position: absolute; left: 5px; bottom: 5px; border-top: 0; padding: 0 0 0 30px; letter-spacing: -.85px; }
.tree { list-style: none; margin: 6px 0 0; padding: 0; display: flex; flex-direction: column; gap: 5px; }
.tree li { height: 25px; display: flex; align-items: center; padding-top: 1px; }
.tg { width: 16px; margin-right: 8px; }
.l0 { padding-left: 21px; }
.l1 { padding-left: 43px; }
.l2 { padding-left: 66px; }
.l3 { padding-left: 113px; }
.l1 .tg { margin-right: 8px; margin-left: -1px; }
.node { height: 25px; background: #f1f1f1; padding: 0 13px 0 4px; display: flex; align-items: center; }
.node svg + svg { margin-left: 11px; }
.node span { margin-left: 17px; white-space: nowrap; letter-spacing: -.1px; }
.node .wide { margin-left: 18px; letter-spacing: 0; }
.root { width: 220px; padding: 0 0 0 4px; }
.node .hot { width: 158px; height: 20px; margin: 0 5px 0 7px; background: #999; color: #fff; font-weight: bold; display: flex; align-items: center; padding-left: 4px; gap: 16px; letter-spacing: .6px; }
.node .hot + svg { margin-left: 0; }

.navbar { position: absolute; left: 800px; bottom: 5px; width: 316px; height: 30px; background: #f1f1f1; display: flex; }

.timeline { flex: 1; background: #f1f1f1; border-top: 2px solid #ccc; display: flex; }
.settings { margin: 21px 16px 0 auto; }

.taskbar { width: 1920px; height: 50px; background: #00373a; display: flex; justify-content: space-between; font: 15px "Open Sans", "Noto Sans", sans-serif; color: #fff; }
.apps { display: flex; }
.running { box-shadow: inset 0 -3px #8edbd9; }
.teams { font: bold 12px "Liberation Sans", sans-serif; fill: #fff; }
.active { position: relative; width: 61px; background: #00575a; box-shadow: inset 0 -3px #8edbd9; padding: 10px 0 0 15px; }
.active span { position: absolute; left: 31px; top: 31px; font-size: 7px; line-height: 8px; font-weight: bold; color: #d98a45; }
.tray { width: 420px; display: flex; align-items: center; }
.lang { width: 51px; padding-left: 6px; font-size: 15px; letter-spacing: -.5px; }
.clock { width: 68px; display: flex; flex-direction: column; align-items: center; line-height: 23px; font-size: 15px; letter-spacing: -.45px; white-space: nowrap; padding: 0 2px 2px 0; }
.notice { margin: 0 25px 0 23px; }
.tray::after { content: ""; width: 1px; height: 50px; background: #4b7375; }
```
